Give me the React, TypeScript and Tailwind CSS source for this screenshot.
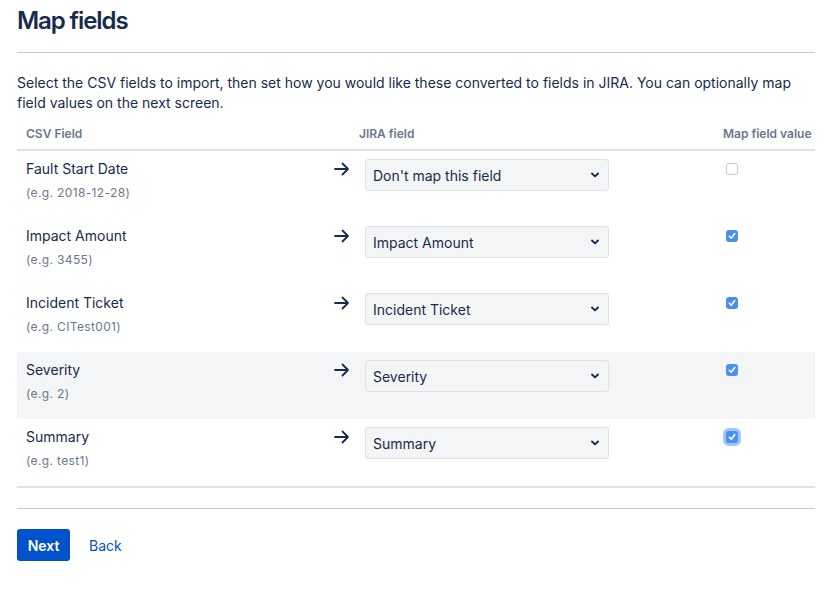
import React from "react";

const rows = [
  { name: "Fault Start Date", ex: "(e.g. 2018-12-28)", value: "Don't map this field", checked: false },
  { name: "Impact Amount", ex: "(e.g. 3455)", value: "Impact Amount", checked: true },
  { name: "Incident Ticket", ex: "(e.g. CITest001)", value: "Incident Ticket", checked: true },
  { name: "Severity", ex: "(e.g. 2)", value: "Severity", checked: true, hover: true },
  { name: "Summary", ex: "(e.g. test1)", value: "Summary", checked: true, focus: true },
];

function Arrow() {
  return (
    <svg width="16" height="14" viewBox="0 0 16 14" fill="none">
      <path d="M1 7h13M8.5 1.5L14 7l-5.5 5.5" stroke="#172b4d" strokeWidth="1.8" strokeLinecap="round" strokeLinejoin="round" />
    </svg>
  );
}

function Chevron() {
  return (
    <svg width="10" height="8" viewBox="0 0 10 8">
      <path d="M2 2.5L5 5.4l3-2.9" stroke="#172b4d" strokeWidth="1.9" fill="none" strokeLinecap="round" strokeLinejoin="round" />
    </svg>
  );
}

function Checkbox({ checked, focus }: { checked: boolean; focus?: boolean }) {
  if (!checked) {
    return <div className="w-[12px] h-[12px] rounded-[3px] border border-[#c7c9cf] bg-white" />;
  }
  return (
    <div className={`w-[12px] h-[12px] rounded-[3px] bg-[#4a90f0] flex items-center justify-center ${focus ? "ring-[3px] ring-[#9fc6ff]" : ""}`}>
      <svg width="8" height="8" viewBox="0 0 8 8">
        <path d="M1.3 4.3L3.2 6.2 6.8 1.6" stroke="white" strokeWidth="1.6" fill="none" strokeLinecap="round" strokeLinejoin="round" />
      </svg>
    </div>
  );
}

export default function App() {
  return (
    <div className="bg-white w-[834px] h-[605px] px-[17px] pt-[7px] text-[#172b4d]" style={{ fontFamily: "Inter, 'Noto Sans', sans-serif" }}>
      <h1 className="text-[24px] leading-[28px] font-semibold tracking-[-0.045em] text-[#172b4d]">Map fields</h1>
      <div className="mt-[17px] h-px bg-[#cccccc] w-[798px]" />
      <p className="mt-[20px] w-[798px] text-[14px] leading-[20px] text-[#172b4d]">
        Select the CSV fields to import, then set how you would like these converted to fields in JIRA. You can optionally map field values on the next screen.
      </p>
      <div className="mt-[7px] w-[798px]">
        <div className="flex text-[12px] leading-[16px] font-semibold text-[#6b778c] pt-[6px] pb-[7px] border-b-2 border-[#dfe1e6]">
          <div className="w-[342px] pl-[9px]">CSV Field</div>
          <div className="w-[364px]">JIRA field</div>
          <div className="pl-[0px]">Map field value</div>
        </div>
        {rows.map((r) => (
          <div key={r.name} className={`flex h-[67px] pt-[8px] ${r.hover ? "bg-[#f4f5f7]" : ""}`}>
            <div className="w-[300px] pl-[9px]">
              <div className="text-[14px] leading-[20px] text-[#172b4d]">{r.name}</div>
              <div className="mt-[6px] text-[12px] leading-[16px] tracking-[0.03em] text-[#6b778c]">{r.ex}</div>
            </div>
            <div className="w-[48px] pl-[17px] pt-[3px]">
              <Arrow />
            </div>
            <div className="w-[361px]">
              <div className="w-[244px] h-[32px] rounded-[3px] border border-[#dfe1e6] bg-[#f4f5f7] flex items-center justify-between pl-[7px] pr-[8px]">
                <span className="text-[14px] text-[#172b4d]">{r.value}</span>
                <Chevron />
              </div>
            </div>
            <div className="pt-[4px]">
              <Checkbox checked={r.checked} focus={r.focus} />
            </div>
          </div>
        ))}
        <div className="h-[2px] bg-[#dfe1e6]" />
      </div>
      <div className="mt-[20px] h-px bg-[#cccccc] w-[798px]" />
      <div className="mt-[20px] flex items-center gap-[19px]">
        <button className="h-[32px] w-[53px] rounded-[3px] bg-[#0052cc] text-white text-[14px] font-semibold">Next</button>
        <a className="text-[14px] text-[#0052cc]">Back</a>
      </div>
    </div>
  );
}
